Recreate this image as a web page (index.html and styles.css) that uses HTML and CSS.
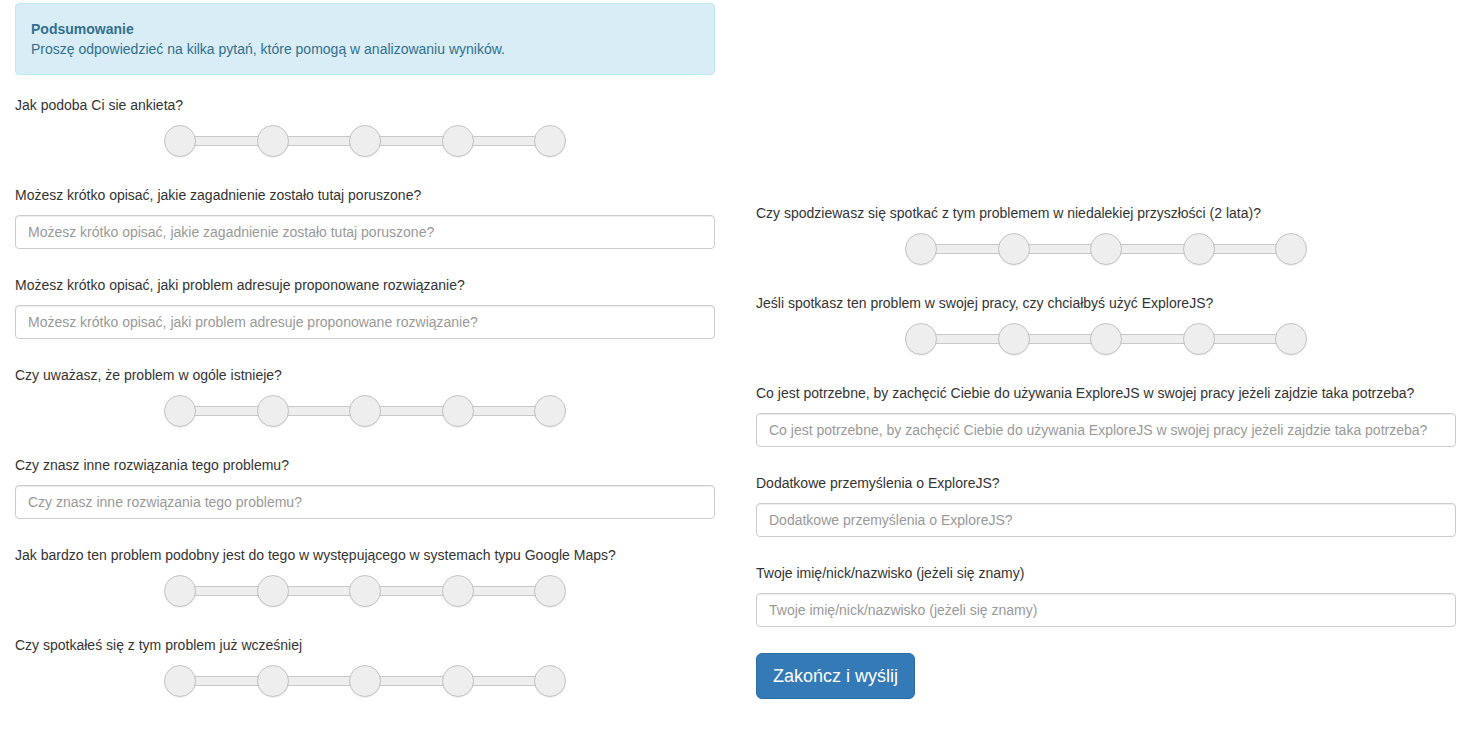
FILE: index.html
```html
<!DOCTYPE html>
<html lang="pl">
<head>
<meta charset="utf-8">
<title>Podsumowanie</title>
<link rel="stylesheet" href="styles.css">
</head>
<body>
<div class="page">
  <div class="col">
    <div class="alert">
      <strong>Podsumowanie</strong>
      <div>Proszę odpowiedzieć na kilka pytań, które pomogą w analizowaniu wyników.</div>
    </div>

    <div class="group">
      <label class="lbl">Jak podoba Ci sie ankieta?</label>
      <div class="scale"><span class="dot"></span><span class="seg"></span><span class="dot"></span><span class="seg"></span><span class="dot"></span><span class="seg"></span><span class="dot"></span><span class="seg"></span><span class="dot"></span></div>
    </div>

    <div class="group">
      <label class="lbl">Możesz krótko opisać, jakie zagadnienie zostało tutaj poruszone?</label>
      <input class="field" type="text" placeholder="Możesz krótko opisać, jakie zagadnienie zostało tutaj poruszone?">
    </div>

    <div class="group">
      <label class="lbl">Możesz krótko opisać, jaki problem adresuje proponowane rozwiązanie?</label>
      <input class="field" type="text" placeholder="Możesz krótko opisać, jaki problem adresuje proponowane rozwiązanie?">
    </div>

    <div class="group">
      <label class="lbl">Czy uważasz, że problem w ogóle istnieje?</label>
      <div class="scale"><span class="dot"></span><span class="seg"></span><span class="dot"></span><span class="seg"></span><span class="dot"></span><span class="seg"></span><span class="dot"></span><span class="seg"></span><span class="dot"></span></div>
    </div>

    <div class="group">
      <label class="lbl">Czy znasz inne rozwiązania tego problemu?</label>
      <input class="field" type="text" placeholder="Czy znasz inne rozwiązania tego problemu?">
    </div>

    <div class="group">
      <label class="lbl">Jak bardzo ten problem podobny jest do tego w występującego w systemach typu Google Maps?</label>
      <div class="scale"><span class="dot"></span><span class="seg"></span><span class="dot"></span><span class="seg"></span><span class="dot"></span><span class="seg"></span><span class="dot"></span><span class="seg"></span><span class="dot"></span></div>
    </div>

    <div class="group last">
      <label class="lbl">Czy spotkałeś się z tym problem już wcześniej</label>
      <div class="scale"><span class="dot"></span><span class="seg"></span><span class="dot"></span><span class="seg"></span><span class="dot"></span><span class="seg"></span><span class="dot"></span><span class="seg"></span><span class="dot"></span></div>
    </div>
  </div>

  <div class="col right">
    <div class="group">
      <label class="lbl">Czy spodziewasz się spotkać z tym problemem w niedalekiej przyszłości (2 lata)?</label>
      <div class="scale"><span class="dot"></span><span class="seg"></span><span class="dot"></span><span class="seg"></span><span class="dot"></span><span class="seg"></span><span class="dot"></span><span class="seg"></span><span class="dot"></span></div>
    </div>

    <div class="group">
      <label class="lbl">Jeśli spotkasz ten problem w swojej pracy, czy chciałbyś użyć ExploreJS?</label>
      <div class="scale"><span class="dot"></span><span class="seg"></span><span class="dot"></span><span class="seg"></span><span class="dot"></span><span class="seg"></span><span class="dot"></span><span class="seg"></span><span class="dot"></span></div>
    </div>

    <div class="group">
      <label class="lbl">Co jest potrzebne, by zachęcić Ciebie do używania ExploreJS w swojej pracy jeżeli zajdzie taka potrzeba?</label>
      <input class="field" type="text" placeholder="Co jest potrzebne, by zachęcić Ciebie do używania ExploreJS w swojej pracy jeżeli zajdzie taka potrzeba?">
    </div>

    <div class="group">
      <label class="lbl">Dodatkowe przemyślenia o ExploreJS?</label>
      <input class="field" type="text" placeholder="Dodatkowe przemyślenia o ExploreJS?">
    </div>

    <div class="group">
      <label class="lbl">Twoje imię/nick/nazwisko (jeżeli się znamy)</label>
      <input class="field" type="text" placeholder="Twoje imię/nick/nazwisko (jeżeli się znamy)">
    </div>

    <div>
      <button class="btn" type="button">Zakończ i wyślij</button>
    </div>
  </div>
</div>
</body>
</html>
```

FILE: styles.css
```css
* { box-sizing: border-box; }

html, body {
  margin: 0;
  padding: 0;
  background: #fff;
}

body {
  font-family: "Liberation Sans", Arial, Helvetica, sans-serif;
  font-size: 14px;
  line-height: 20px;
  color: #333;
}

.page {
  display: flex;
  align-items: flex-start;
  gap: 41px;
  padding: 3px 15px 0 15px;
}

.col {
  width: 700px;
  display: flex;
  flex-direction: column;
}

.col.right {
  margin-top: 200px;
}

.alert {
  background: #d9edf7;
  border: 1px solid #bce8f1;
  color: #31708f;
  border-radius: 4px;
  padding: 15px;
  margin-bottom: 20px;
}

.alert strong {
  display: block;
  font-weight: bold;
}

.group {
  display: flex;
  flex-direction: column;
  margin-bottom: 26px;
}

.group.last {
  margin-bottom: 0;
}

.lbl {
  display: block;
  height: 20px;
  margin-bottom: 10px;
}

.field {
  display: block;
  width: 100%;
  height: 34px;
  padding: 6px 12px;
  font-family: inherit;
  font-size: 14px;
  line-height: 20px;
  color: #555;
  background: #fff;
  border: 1px solid #ccc;
  border-radius: 4px;
  box-shadow: inset 0 1px 1px rgba(0,0,0,.075);
  outline: none;
}

.field::placeholder {
  color: #999;
}

.scale {
  display: flex;
  align-items: center;
  width: 402px;
  height: 32px;
  margin: 0 auto 2px auto;
}

.dot {
  flex: 0 0 32px;
  width: 32px;
  height: 32px;
  border-radius: 50%;
  background: #eee;
  border: 1px solid #c4c4c4;
  box-shadow: 0 1px 1px rgba(0,0,0,.06);
  position: relative;
  z-index: 1;
}

.seg {
  flex: 1 1 auto;
  height: 10px;
  background: #eee;
  border-top: 1px solid #c8c8c8;
  border-bottom: 1px solid #c8c8c8;
  margin: 0 -3px;
}

.btn {
  display: inline-block;
  height: 46px;
  padding: 10px 16px;
  font-family: inherit;
  font-size: 18px;
  line-height: 24px;
  color: #fff;
  background: #337ab7;
  border: 1px solid #2e6da4;
  border-radius: 6px;
  cursor: pointer;
}
```
